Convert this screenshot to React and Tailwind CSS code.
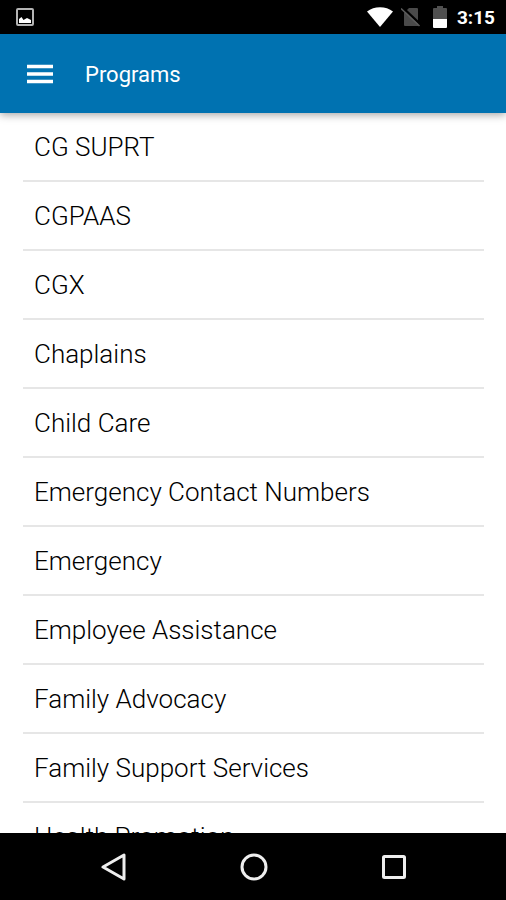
const programs = [
  'CG SUPRT',
  'CGPAAS',
  'CGX',
  'Chaplains',
  'Child Care',
  'Emergency Contact Numbers',
  'Emergency',
  'Employee Assistance',
  'Family Advocacy',
  'Family Support Services',
  'Health Promotion',
]

function StatusBar() {
  return (
    <div className="flex h-[34px] shrink-0 items-center justify-between bg-black pr-[11px] pl-4 text-white">
      <svg width="18" height="18" viewBox="0 0 18 18" aria-hidden="true">
        <rect x="1" y="1" width="16" height="16" rx="1" fill="none" stroke="#b4b4b4" strokeWidth="2" />
        <path d="M3 15v-4l2.500-2 2 3 3.500-2 2 1 2 1v3z" fill="#fff" />
      </svg>
      <div className="flex items-center">
        <svg width="26" height="20" viewBox="0 0 26 20" aria-hidden="true">
          <path d="M0 4.5C7-1.2 19-1.2 26 4.5L13 20z" fill="#fff" />
        </svg>
        <svg className="ml-2" width="20" height="20" viewBox="0 0 20 20" aria-hidden="true">
          <path d="M8 1h8q1 0 1 1v17H4q-1 0-1-1V6z" fill="#4a4a4a" />
          <path d="M1 0l19 18" stroke="#000" strokeWidth="2.4" />
          <path d="M0 1.500l18.500 17.500" stroke="#5c5c5c" strokeWidth="1.6" />
        </svg>
        <svg className="ml-[11px]" width="16" height="22" viewBox="0 0 16 22" aria-hidden="true">
          <path d="M5 0h6v2h3q1 0 1 1v10H1V3q0-1 1-1h3z" fill="#505050" />
          <path d="M1 13h14v8q0 1-1 1H2q-1 0-1-1z" fill="#fff" />
        </svg>
        <span className="ml-[9px] pt-px text-[19px] leading-6 font-bold">3:15</span>
      </div>
    </div>
  )
}

function Header() {
  return (
    <header className="relative z-10 flex h-[79px] shrink-0 items-center bg-[#0072b1] pl-[26px] text-white shadow-[0_2px_8px_rgba(0,0,0,0.35)]">
      <button type="button" aria-label="Menu">
        <svg width="28" height="20" viewBox="0 0 28 20" aria-hidden="true">
          <path d="M1 2.5h26M1 10h26M1 17.5h26" stroke="#fff" strokeWidth="3.4" />
        </svg>
      </button>
      <h1 className="ml-[31px] pt-[2px] text-[22px] leading-8">Programs</h1>
    </header>
  )
}

function NavBar() {
  return (
    <nav className="flex h-[67px] shrink-0 items-center justify-center gap-28 bg-black pl-px">
      <button type="button" aria-label="Back">
        <svg width="28" height="28" viewBox="0 0 28 28" aria-hidden="true">
          <path d="M24 2v24L3 14z" fill="none" stroke="#eee" strokeWidth="3" strokeLinejoin="round" />
        </svg>
      </button>
      <button type="button" aria-label="Home">
        <svg width="28" height="28" viewBox="0 0 28 28" aria-hidden="true">
          <circle cx="14" cy="14" r="12" fill="none" stroke="#eee" strokeWidth="3" />
        </svg>
      </button>
      <button type="button" aria-label="Recent apps">
        <svg width="28" height="28" viewBox="0 0 28 28" aria-hidden="true">
          <rect x="3.5" y="3.5" width="21" height="21" rx="1" fill="none" stroke="#eee" strokeWidth="3" />
        </svg>
      </button>
    </nav>
  )
}

function App() {
  return (
    <div className="flex h-screen flex-col bg-white font-[Roboto,sans-serif]">
      <StatusBar />
      <Header />
      <main className="min-h-0 flex-1 overflow-hidden pr-[22px] pl-[23px]">
        <ul>
          {programs.map((name) => (
            <li key={name} className="border-b-2 border-[#e6e6e6]">
              <a href="#" className="block px-[11px] pt-[18px] pb-[17px] text-[26px] leading-8 font-light text-black">
                {name}
              </a>
            </li>
          ))}
        </ul>
      </main>
      <NavBar />
    </div>
  )
}

export default App
